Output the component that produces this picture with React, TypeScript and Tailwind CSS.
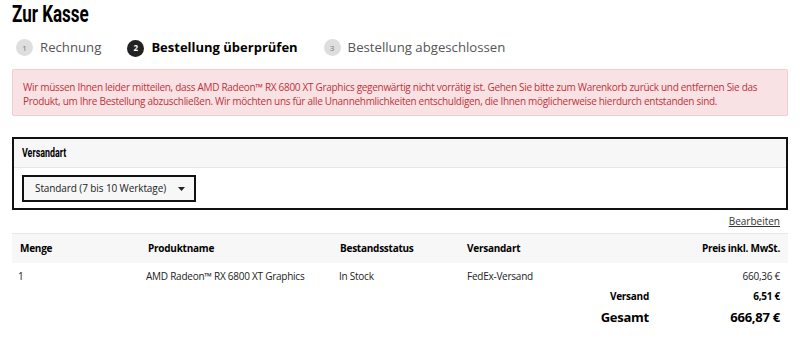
const body = "font-['Open_Sans',sans-serif]";
const condensed = "font-['Roboto',sans-serif]";

const steps = [
  { n: 1, label: "Rechnung", active: false },
  { n: 2, label: "Bestellung überprüfen", active: true },
  { n: 3, label: "Bestellung abgeschlossen", active: false },
];

const cols = "grid grid-cols-[128px_192px_127px_1fr_200px] items-center";

export default function App() {
  return (
    <div className={`${body} h-[339px] w-[800px] overflow-hidden bg-white px-3 text-[#222]`}>
      {/* Title */}
      <h1 className="h-[30px] pt-[1px]">
        <span
          className={`${condensed} inline-block origin-left scale-x-[0.74] text-[23px] leading-[28px] font-bold text-black`}
        >
          Zur Kasse
        </span>
      </h1>

      {/* Steps */}
      <div className="mt-[6px] flex h-[24px] items-center gap-[26px] pl-[4px]">
        {steps.map((s) => (
          <div key={s.n} className="flex items-center gap-[7px]">
            <span
              className={
                s.active
                  ? "flex h-[17px] w-[17px] items-center justify-center rounded-full bg-[#222] text-[8px] font-bold text-white"
                  : "flex h-[17px] w-[17px] items-center justify-center rounded-full bg-[#dedede] text-[8px] text-[#777]"
              }
            >
              {s.n}
            </span>
            <span
              className={s.active ? "text-[13px] font-bold text-black" : "text-[13.2px] text-[#555]"}
            >
              {s.label}
            </span>
          </div>
        ))}
      </div>

      {/* Alert */}
      <div className="mt-[9px] rounded-[2px] border border-[#f1cdd0] bg-[#f9e2e4] px-[10px] pt-[10px] pb-[7px] text-[10px] leading-[14px] tracking-[-0.3px] text-[#c0323a]">
        Wir müssen Ihnen leider mitteilen, dass AMD Radeon™ RX 6800 XT Graphics gegenwärtig nicht vorrätig ist. Gehen Sie bitte zum Warenkorb zurück und entfernen Sie das Produkt, um Ihre Bestellung abzuschließen. Wir möchten uns für alle Unannehmlichkeiten entschuldigen, die Ihnen möglicherweise hierdurch entstanden sind.
      </div>

      {/* Shipping panel */}
      <div className="mt-[21px] border-2 border-[#111]">
        <div className="flex h-[29px] items-center border-b border-[#e6e6e6] bg-[#f7f7f7] px-[8px]">
          <span className={`${condensed} inline-block origin-left scale-x-[0.74] text-[12px] font-bold text-black`}>
            Versandart
          </span>
        </div>
        <div className="px-[8px] pt-[7px] pb-[6px]">
          <div className="flex h-[27px] w-[174px] items-center justify-between border-2 border-[#111] bg-[#f7f7f7] pr-[9px] pl-[11px] text-[10px] tracking-[-0.1px] whitespace-nowrap text-[#222]">
            <span>Standard (7 bis 10 Werktage)</span>
            <svg width="7" height="4" viewBox="0 0 7 4">
              <path d="M0 0h7L3.5 4z" fill="#222" />
            </svg>
          </div>
        </div>
      </div>

      {/* Edit link */}
      <div className="mt-[4px] flex h-[14px] justify-end pr-[8px]">
        <a className="text-[10px] leading-[14px] text-[#333] underline">Bearbeiten</a>
      </div>

      {/* Order table */}
      <div className="mt-[5px] text-[10px] tracking-[-0.25px]">
        <div className={`${cols} h-[30px] border-t border-[#e8e8e8] bg-[#f7f7f7] font-bold text-black`}>
          <span className="pl-[8px]">Menge</span>
          <span className="pl-[8px]">Produktname</span>
          <span className="pl-[8px]">Bestandsstatus</span>
          <span className="pl-[8px]">Versandart</span>
          <span className="pr-[8px] text-right">Preis inkl. MwSt.</span>
        </div>
        <div className={`${cols} h-[26px] text-[#222]`}>
          <span className="pl-[6px]">1</span>
          <span className="pl-[6px]">AMD Radeon™ RX 6800 XT Graphics</span>
          <span className="pl-[7px]">In Stock</span>
          <span className="pl-[8px]">FedEx-Versand</span>
          <span className="pr-[8px] text-right">660,36 €</span>
        </div>
        <div className="flex h-[14px] items-center justify-end font-bold text-black">
          <span className="w-[110px] text-right">Versand</span>
          <span className="w-[139px] pr-[8px] text-right">6,51 €</span>
        </div>
        <div className="flex h-[30px] items-center justify-end text-[13px] font-bold text-black">
          <span className="w-[110px] text-right">Gesamt</span>
          <span className="w-[139px] pr-[8px] text-right">666,87 €</span>
        </div>
      </div>
    </div>
  );
}
